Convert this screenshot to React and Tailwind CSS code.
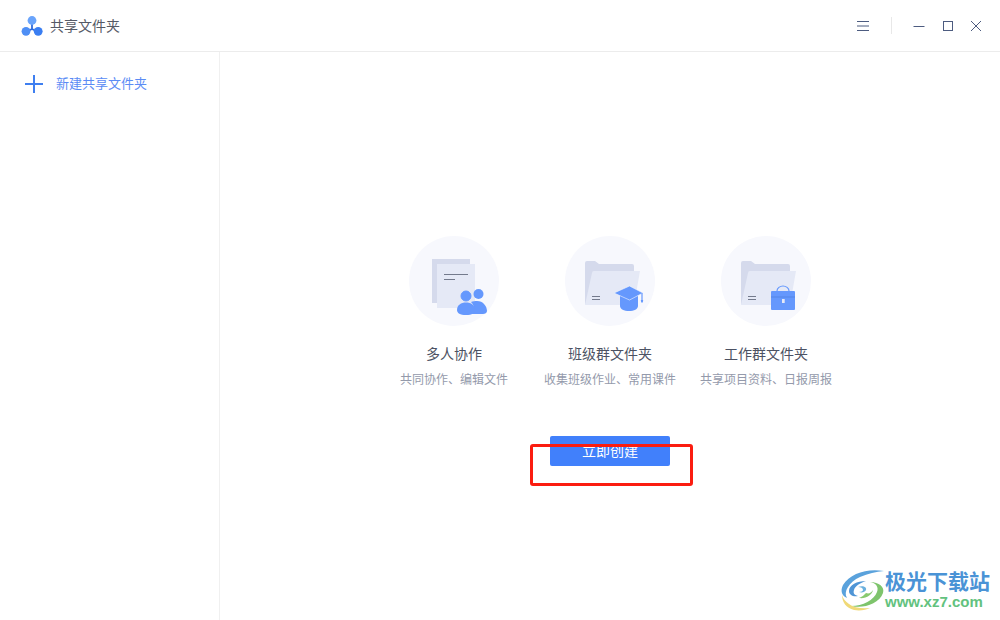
import React from "react";

const FONT = { fontFamily: '"Noto Sans CJK SC", "Liberation Sans", sans-serif' };

const cards = [
  { icon: "doc", title: "多人协作", desc: "共同协作、编辑文件" },
  { icon: "cap", title: "班级群文件夹", desc: "收集班级作业、常用课件" },
  { icon: "bag", title: "工作群文件夹", desc: "共享项目资料、日报周报" },
];

function AppLogo() {
  return (
    <svg width="22" height="22" viewBox="0 0 22 22">
      <path d="M11 8v6M11 14L5 17M11 14l6 3" stroke="#2f6bdc" strokeWidth="1.8" fill="none" />
      <circle cx="11" cy="5.5" r="4.4" fill="#6aa4fb" />
      <circle cx="5" cy="16.3" r="4.4" fill="#4f8ff5" />
      <circle cx="17.2" cy="16.3" r="4.4" fill="#3a7ef2" />
    </svg>
  );
}

function WindowControls() {
  return (
    <div className="flex items-center">
      <svg width="14" height="12" viewBox="0 0 14 12" className="mr-[21px]">
        <path d="M1 1.500h12M1 6h12M1 10.500h12" stroke="#4d5c80" strokeWidth="1" />
      </svg>
      <div className="w-px h-[17px] bg-[#e8e8e8] mr-[21px]" />
      <svg width="12" height="12" viewBox="0 0 12 12" className="mr-[17px]">
        <path d="M0.500 6.500h11" stroke="#4d5c80" strokeWidth="1" />
      </svg>
      <svg width="12" height="12" viewBox="0 0 12 12" className="mr-[16px]">
        <rect x="1.500" y="1.500" width="9" height="9" fill="none" stroke="#4d5c80" strokeWidth="1" />
      </svg>
      <svg width="12" height="12" viewBox="0 0 12 12">
        <path d="M1 1l10 10M11 1L1 11" stroke="#4d5c80" strokeWidth="1" />
      </svg>
    </div>
  );
}

function Folder() {
  return (
    <>
      <path d="M20 27a2 2 0 0 1 2-2h8l4 3h33a2 2 0 0 1 2 2v39H22a2 2 0 0 1-2-2z" fill="#d5daec" />
      <path d="M27 37a2 2 0 0 1 2-2h46l-6 34H20z" fill="#e5e9f6" />
      <path d="M27 60.500h8M27 63.500h8" stroke="#737a8c" strokeWidth="1" />
    </>
  );
}

function CardIcon({ type }) {
  return (
    <svg width="90" height="90" viewBox="0 0 90 90">
      <circle cx="45" cy="45" r="45" fill="#f7f8fd" />
      {type === "doc" && (
        <>
          <rect x="23" y="23" width="38" height="44" fill="#d5daec" />
          <rect x="28" y="28" width="38" height="44" fill="#e5e9f6" />
          <path d="M35 38.500h24M35 43.500h11" stroke="#737a8c" strokeWidth="1" />
          <circle cx="69.500" cy="58" r="5" fill="#6598fd" />
          <path d="M62 78c2-1 3-3 3-5 0-3-1-5-3-7 2-1 4-1 6-1 6 0 10 5 10 10 0 2-2 3-4 3z" fill="#6598fd" />
          <circle cx="57" cy="60" r="5" fill="#6598fd" stroke="#6598fd" />
          <path d="M48 74c0-5 4-7.500 9-7.500s9 2.500 9 7.500c0 3-3 5-9 5s-9-2-9-5z" fill="#6598fd" />
        </>
      )}
      {type === "cap" && (
        <>
          <Folder />
          <path d="M55 60h18v10c0 3-4 5-9 5s-9-2-9-5z" fill="#6598fd" />
          <path d="M49 57l15.500-7L78 57l-13.500 7z" fill="#6598fd" stroke="#f7f8fd" strokeWidth="0.6" />
          <path d="M77 57v7" stroke="#6598fd" strokeWidth="1.2" />
          <path d="M75.800 64h2.400l-.4 2.500h-1.600z" fill="#6598fd" />
        </>
      )}
      {type === "bag" && (
        <>
          <Folder />
          <path d="M56 55c0-3 3-5 6-5s6 2 6 5" fill="none" stroke="#6598fd" strokeWidth="1.2" />
          <rect x="50" y="55" width="24" height="19" rx="1" fill="#6598fd" />
          <path d="M50 61h24" stroke="#5585e6" strokeWidth="1" />
          <rect x="61" y="63" width="2.700" height="4" fill="#e5e9f6" />
        </>
      )}
    </svg>
  );
}

function Watermark() {
  return (
    <div className="absolute left-[840px] top-[568px] flex items-start">
      <svg width="46" height="44" viewBox="0 0 46 44">
        <path d="M44 3C28 0 10 5 3 17c-3 6-1 11 4 13C3 24 9 14 20 9c8-3.500 16-5 24-6z" fill="#5aa2dc" />
        <path d="M26 13c-9 0-17 4-17 10 0 4 4 6 9 5-4-1-5-3-4-6 1-4 6-7 12-9z" fill="#4f95d6" />
        <path d="M18 19c5-2 9 0 8 3-1 2-4 3-7 2 2 0 4-1 4-2 0-2-2-3-5-3z" fill="#6bb0de" />
        <path d="M30 14c6 1 9 5 7 10-3 8-14 14-26 14 12 3 28-2 32-13 2-6-4-11-13-11z" fill="#7ec46c" />
        <path d="M26 25c3 1 5 0 7-3-1 5-7 9-14 8 3-1 5-3 7-5z" fill="#88c96f" />
        <path d="M2 27c0 7 4 13 12 15 6 1 12 0 16-2-8 1-16 0-21-4-3-2-6-5-7-9z" fill="#f0d977" />
      </svg>
      <div className="flex flex-col ml-[-1px]">
        <span className="text-[21px] leading-[25px] font-bold text-[#4a93d6] whitespace-nowrap">极光下载站</span>
        <span className="text-[15px] leading-[18px] font-bold text-[#62c27e] whitespace-nowrap" style={{ fontFamily: '"Liberation Sans", sans-serif' }}>
          www.xz7.com
        </span>
      </div>
    </div>
  );
}

export default function App() {
  return (
    <div className="relative h-[620px] w-[1000px] overflow-hidden bg-white" style={FONT}>
      {/* Title bar */}
      <header className="h-[52px] border-b border-[#ececec] flex items-center justify-between pl-[21px] pr-[18px]">
        <div className="flex items-center gap-[7px]">
          <AppLogo />
          <span className="text-[14px] text-[#555a66]">共享文件夹</span>
        </div>
        <WindowControls />
      </header>

      <div className="flex h-[568px]">
        {/* Sidebar */}
        <aside className="w-[220px] border-r border-[#f0f0f0] pt-[22px] pl-[25px]">
          <div className="flex items-center">
            <svg width="18" height="18" viewBox="0 0 18 18">
              <path d="M9 0v18M0 9h18" stroke="#3f7ff0" strokeWidth="2" />
            </svg>
            <span className="ml-[13px] pb-px text-[13px] leading-[18px] text-[#5b8cf5]">新建共享文件夹</span>
          </div>
        </aside>

        {/* Main */}
        <main className="flex-1 flex flex-col items-center pt-[184px]">
          <div className="grid grid-cols-3 w-[468px]">
            {cards.map((card) => (
              <div key={card.title} className="flex flex-col items-center">
                <CardIcon type={card.icon} />
                <div className="mt-[17px] text-[14px] leading-5 text-[#4c5263] whitespace-nowrap">{card.title}</div>
                <div className="mt-[7px] text-[12px] leading-[18px] text-[#949aab] whitespace-nowrap">{card.desc}</div>
              </div>
            ))}
          </div>
          <button className="mt-[48px] w-[120px] h-[30px] pb-[2px] rounded-[2px] bg-[#4180fb] text-white text-[14px]">
            立即创建
          </button>
        </main>
      </div>

      {/* Annotation over the button */}
      <div className="absolute left-[530px] top-[444px] w-[163px] h-[42px] border-[3px] border-[#fb1c10] rounded-[3px]" />
      <Watermark />
    </div>
  );
}
